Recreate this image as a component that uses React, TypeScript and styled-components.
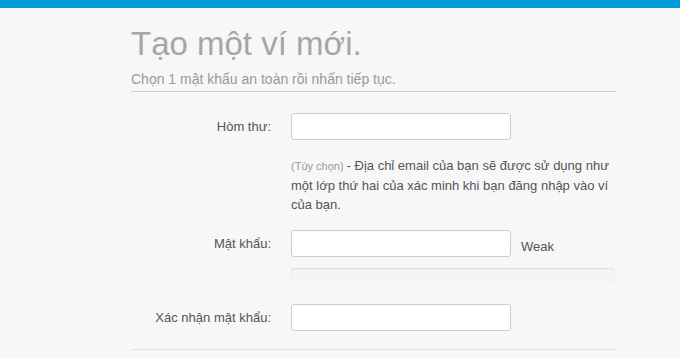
import styled, { createGlobalStyle } from 'styled-components';

const GlobalStyle = createGlobalStyle`
  html, body {
    margin: 0;
    padding: 0;
    background: #f7f7f7;
    font-family: "Liberation Sans", Arial, sans-serif;
    color: #555555;
  }
`;

const TopBar = styled.div`
  height: 8px;
  background: #009bd6;
`;

const Page = styled.div`
  width: 485px;
  margin-left: 131px;
  padding-top: 16px;
`;

const Title = styled.h1`
  margin: 0;
  font-size: 33px;
  font-weight: 400;
  line-height: 40px;
  color: #a6a6a6;
`;

const Subtitle = styled.p`
  margin: 5px 0 0;
  font-size: 14px;
  line-height: 20px;
  color: #999999;
  padding-bottom: 2px;
  border-bottom: 1px solid #cccccc;
`;

const Form = styled.div`
  padding-top: 21px;
  padding-bottom: 18px;
  border-bottom: 1px solid #e2e2e2;
`;

const Row = styled.div<{ $gap?: number }>`
  display: grid;
  grid-template-columns: 140px 1fr;
  column-gap: 20px;
  margin-bottom: ${(p) => p.$gap ?? 0}px;
`;

const Label = styled.label`
  text-align: right;
  font-size: 13px;
  line-height: 27px;
  color: #555555;
`;

const Field = styled.div`
  display: flex;
  flex-direction: column;
`;

const InputLine = styled.div`
  display: flex;
  align-items: center;
  gap: 10px;
`;

const Input = styled.input`
  box-sizing: border-box;
  width: 220px;
  height: 27px;
  padding: 3px 6px;
  background: #ffffff;
  border: 1px solid #cccccc;
  border-radius: 3px;
  font-family: inherit;
  font-size: 13px;
  outline: none;
`;

const Strength = styled.span`
  font-size: 13px;
  color: #555555;
  padding-top: 6px;
`;

const Help = styled.p`
  margin: 16px 0 0;
  font-size: 13px;
  line-height: 19px;
  color: #555555;
`;

const Muted = styled.small`
  font-size: 11px;
  color: #999999;
  margin-right: 3px;
`;

const Meter = styled.div`
  box-sizing: border-box;
  margin-top: 11px;
  height: 17px;
  width: 324px;
  background: #f5f5f5;
  border-radius: 4px;
  box-shadow: inset 0 1px 2px rgba(0, 0, 0, 0.1);
`;

export default function App() {
  return (
    <>
      <GlobalStyle />
      <TopBar />
      <Page>
        <Title>Tạo một ví mới.</Title>
        <Subtitle>Chọn 1 mật khẩu an toàn rồi nhấn tiếp tục.</Subtitle>
        <Form>
          <Row $gap={16}>
            <Label>Hòm thư:</Label>
            <Field>
              <Input type="email" />
              <Help>
                <Muted>(Tùy chọn)</Muted>- Địa chỉ email của bạn sẽ được sử dụng
                như một lớp thứ hai của xác minh khi bạn đăng nhập vào ví của
                bạn.
              </Help>
            </Field>
          </Row>
          <Row $gap={19}>
            <Label>Mật khẩu:</Label>
            <Field>
              <InputLine>
                <Input type="password" />
                <Strength>Weak</Strength>
              </InputLine>
              <Meter />
            </Field>
          </Row>
          <Row>
            <Label>Xác nhận mật khẩu:</Label>
            <Field>
              <Input type="password" />
            </Field>
          </Row>
        </Form>
      </Page>
    </>
  );
}
